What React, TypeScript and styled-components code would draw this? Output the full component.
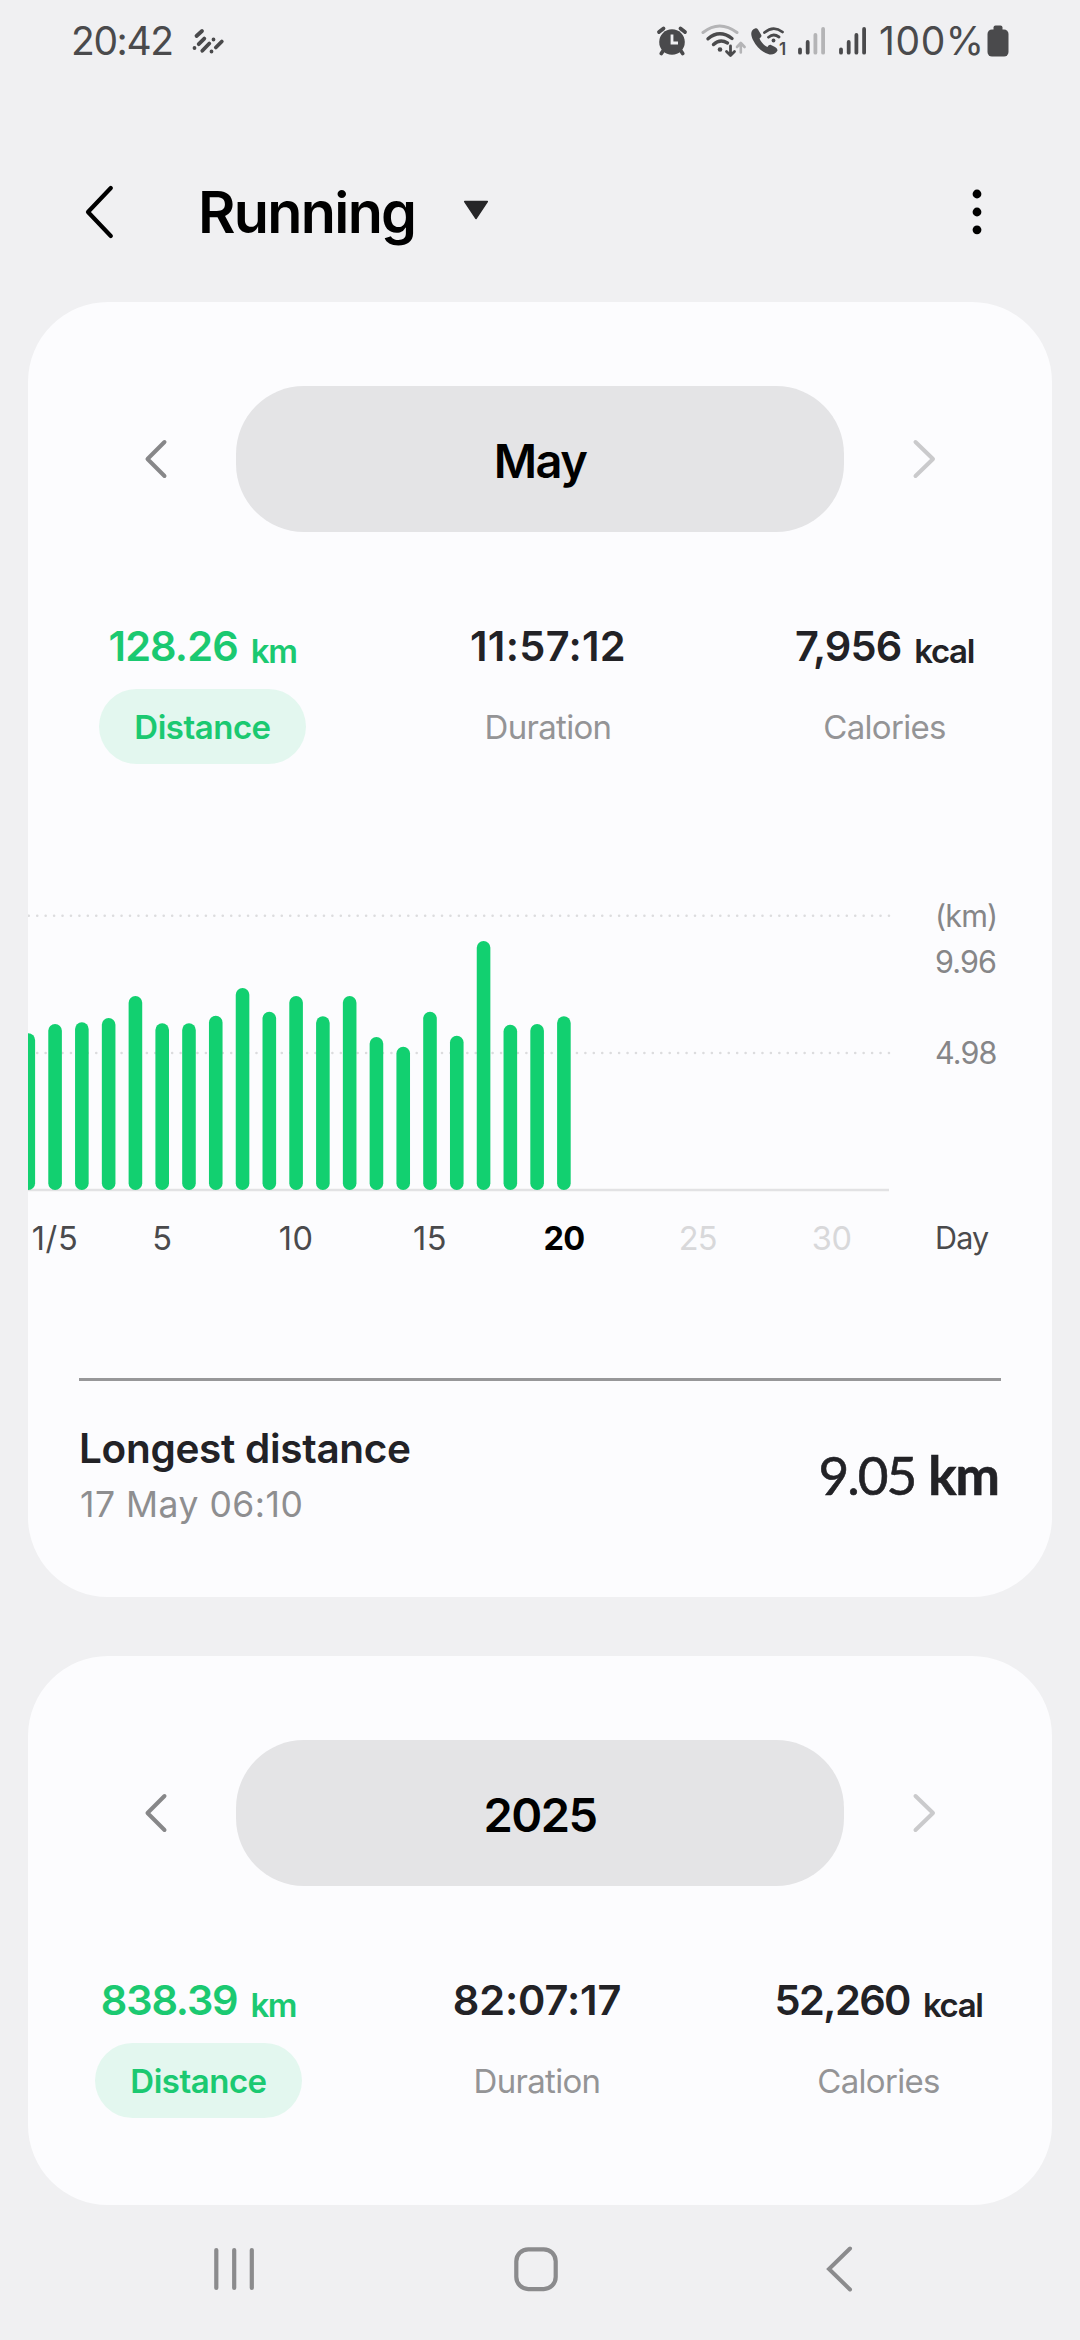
import React from "react";
import styled, { createGlobalStyle } from "styled-components";

const GlobalStyle = createGlobalStyle`
  * { box-sizing: border-box; }
  body {
    margin: 0;
    background: #f0f0f2;
    font-family: Inter, Roboto, sans-serif;
  }
  svg { display: block; flex: none; }
  button { border: 0; padding: 0; background: none; font: inherit; color: inherit; }
`;

const INK = "#4a4a4c";
const FAINT = "#b4b4b6";
const GREEN = "#12d070";

const Screen = styled.div`
  width: 1080px;
  height: 2340px;
  display: flex;
  flex-direction: column;
  overflow: hidden;
  background: #f0f0f2;
`;

const StatusBar = styled.div`
  display: flex;
  align-items: center;
  height: 82px;
  padding: 0 70px 0 71px;
  color: ${INK};
`;

const Clock = styled.div`
  width: 120px;
  font-size: 39px;
  line-height: 48px;
  font-weight: 400;
  letter-spacing: -1.4px;
`;

const StatusIcons = styled.div`
  display: flex;
  align-items: center;
  margin-left: auto;
`;

const BatteryText = styled.div`
  width: 107px;
  margin-left: 10px;
  font-size: 39px;
  line-height: 48px;
  font-weight: 400;
  letter-spacing: 0.6px;
  white-space: nowrap;
`;

const Header = styled.header`
  display: flex;
  align-items: center;
  height: 220px;
  padding: 40px 92px 0 81px;
`;

const TitleButton = styled.button`
  display: flex;
  align-items: center;
  margin-left: 79px;
`;

const Title = styled.h1`
  width: 265px;
  margin: 0;
  text-align: left;
  font-size: 57.5px;
  line-height: 70px;
  font-weight: 600;
  letter-spacing: -1.7px;
  color: #000;
`;

const MoreButton = styled.button`
  margin-left: auto;
`;

const Cards = styled.main`
  display: flex;
  flex-direction: column;
  gap: 59px;
  padding: 0 28px;
`;

const Card = styled.section`
  padding: 84px 0 0;
  border-radius: 80px;
  background: #fcfcfe;
  overflow: hidden;
`;

const Period = styled.div`
  display: flex;
  align-items: center;
  justify-content: space-between;
  padding: 0 112px;
`;

const PeriodPill = styled.button`
  width: 608px;
  height: 146px;
  padding-top: 3px;
  border-radius: 68px;
  background: #e4e4e6;
  color: #000;
  font-size: 47px;
  font-weight: 600;
  letter-spacing: -1.5px;
`;

const Stats = styled.div<{ $left: number; $gap: number; $bottom: number }>`
  display: flex;
  gap: ${(p) => p.$gap}px;
  padding: 84px 0 ${(p) => p.$bottom}px ${(p) => p.$left}px;
`;

const Stat = styled.div<{ $width: number }>`
  display: flex;
  flex-direction: column;
  align-items: center;
  gap: 13px;
  width: ${(p) => p.$width}px;
`;

const StatValue = styled.div<{ $active?: boolean; $tracking: number }>`
  display: flex;
  align-items: center;
  gap: 13px;
  height: 60px;
  color: ${(p) => (p.$active ? "#1bc971" : "#222226")};
  font-size: 41.5px;
  font-weight: 600;
  letter-spacing: ${(p) => p.$tracking}px;
  white-space: nowrap;
`;

const StatUnit = styled.span`
  padding-top: 9px;
  font-size: 33px;
  letter-spacing: -1.4px;
`;

const StatLabel = styled.div<{ $active?: boolean }>`
  display: flex;
  align-items: center;
  justify-content: center;
  height: 75px;
  padding-top: 1px;
  width: ${(p) => (p.$active ? "207px" : "auto")};
  border-radius: 38px;
  background: ${(p) => (p.$active ? "#e3f7ef" : "transparent")};
  color: ${(p) => (p.$active ? "#1bc971" : "#949496")};
  font-size: 33px;
  font-weight: ${(p) => (p.$active ? 600 : 400)};
  letter-spacing: ${(p) => (p.$active ? -0.5 : -0.7)}px;
  white-space: nowrap;
`;

const Chart = styled.svg`
  font-family: Inter, Roboto, sans-serif;
`;

const Record = styled.div`
  display: flex;
  align-items: center;
  justify-content: space-between;
  height: 219px;
  margin: 108px 51px 0;
  padding-bottom: 30px;
  border-top: 3px solid #979799;
`;

const RecordTitle = styled.div`
  padding-top: 4px;
  font-size: 40.5px;
  line-height: 58px;
  font-weight: 600;
  letter-spacing: -0.3px;
  color: #222226;
`;

const RecordDate = styled.div`
  padding-left: 1px;
  font-size: 35.5px;
  line-height: 54px;
  letter-spacing: 0.5px;
  color: #8e8e90;
`;

const RecordValue = styled.div`
  display: flex;
  gap: 13px;
  padding: 1px 2px 0 0;
  font-family: Lato, "Noto Sans", sans-serif;
  font-size: 53px;
  line-height: 72px;
  letter-spacing: -2px;
  color: #222226;
  -webkit-text-stroke: 0.6px #222226;
`;

const RecordUnit = styled.span`
  font-weight: 700;
  letter-spacing: -1px;
`;

const NavBar = styled.nav`
  display: flex;
  align-items: center;
  height: 135px;
  padding: 0 225px 7px 211px;
  justify-content: space-between;
`;

const HomeIcon = styled.svg`
  margin-right: 8px;
`;

const BAR_TOPS = [
  1033.3, 1024, 1022.3, 1018, 996, 1023.3, 1023.3, 1015.7, 988, 1011.7, 996,
  1016.3, 996, 1037, 1046.7, 1011.7, 1035.7, 941, 1024.7, 1024, 1016.3,
];
const FIRST_BAR = 28.3;
const BAR_STEP = 26.78;
const BAR_WIDTH = 13.6;
const BASELINE = 1190;

const DAYS = [
  { text: "1/5", day: 1, fill: INK, weight: 400, tracking: 0.7 },
  { text: "5", day: 5, fill: INK, weight: 400, tracking: 0 },
  { text: "10", day: 10, fill: INK, weight: 400, tracking: 0.6 },
  { text: "15", day: 15, fill: INK, weight: 400, tracking: 0.4 },
  { text: "20", day: 20, fill: "#000", weight: 700, tracking: -0.8 },
  { text: "25", day: 25, fill: "#d8d8da", weight: 400, tracking: -0.8 },
  { text: "30", day: 30, fill: "#d8d8da", weight: 400, tracking: -0.4 },
];

const SCALE = [
  { text: "(km)", y: 926.5, fill: "#868688" },
  { text: "9.96", y: 973.2, fill: "#868688" },
  { text: "4.98", y: 1063.7, fill: "#868688" },
  { text: "Day", y: 1249, fill: INK },
];

function MonthChart() {
  return (
    <Chart width="1024" height="380" viewBox="28 890 1024 380">
      {[915.7, 1053].map((y) => (
        <line key={y} x1="28.8" x2="889.5" y1={y} y2={y} stroke="#dcdcde" strokeWidth="2.6"
          strokeLinecap="round" strokeDasharray="0 8.433" />
      ))}
      <line x1="28" x2="889" y1={BASELINE} y2={BASELINE} stroke="#e2e2e4" strokeWidth="2.4" />
      {BAR_TOPS.map((top, i) => (
        <rect key={i} x={FIRST_BAR + i * BAR_STEP - BAR_WIDTH / 2} y={top} width={BAR_WIDTH}
          height={BASELINE - top} rx={BAR_WIDTH / 2} fill={GREEN} />
      ))}
      {DAYS.map((d) => (
        <text key={d.text} x={FIRST_BAR + d.day * BAR_STEP} y="1250" textAnchor="middle"
          fontSize="32.5" letterSpacing={d.tracking} fontWeight={d.weight} fill={d.fill}>
          {d.text}
        </text>
      ))}
      {SCALE.map((s) => (
        <text key={s.text} x="935" y={s.y} fontSize="30.5" letterSpacing="-0.85" fill={s.fill}>
          {s.text}
        </text>
      ))}
    </Chart>
  );
}

function Chevron({ right, color }: { right?: boolean; color: string }) {
  return (
    <svg width="34" height="44" viewBox="0 0 34 44" fill="none" stroke={color} strokeWidth="4"
      strokeLinecap="round" strokeLinejoin="round">
      <path d={right ? "M9.5 5L27 22L9.5 39" : "M24.500 5L7.500 22L24.500 39"} />
    </svg>
  );
}

type StatItem = { value: string; unit?: string; label: string; width: number; tracking: number };

function StatRow({ items, left, gap, bottom }: { items: StatItem[]; left: number; gap: number; bottom: number }) {
  return (
    <Stats $left={left} $gap={gap} $bottom={bottom}>
      {items.map((s, i) => (
        <Stat key={s.label} $width={s.width}>
          <StatValue $active={i === 0} $tracking={s.tracking}>
            {s.value}
            {s.unit && <StatUnit>{s.unit}</StatUnit>}
          </StatValue>
          <StatLabel $active={i === 0}>{s.label}</StatLabel>
        </Stat>
      ))}
    </Stats>
  );
}

function PeriodSwitch({ text }: { text: string }) {
  return (
    <Period>
      <Chevron color="#878789" />
      <PeriodPill>{text}</PeriodPill>
      <Chevron right color="#cacacc" />
    </Period>
  );
}

function ActivityIcon() {
  return (
    <svg width="34" height="30" viewBox="191 26 34 30" stroke={INK} strokeWidth="3.8" strokeLinecap="round">
      <path d="M196.500 36L202 31M198.700 44.200L204.300 38.600M202.300 50.800L209.300 43.500M215.800 47.500L221.800 41.500M194.500 48h.01M213.500 39.500h.01M211.500 51.500h.01" />
    </svg>
  );
}

function AlarmIcon() {
  return (
    <svg width="34" height="34" viewBox="655.500 25 34 34" fill="none" strokeLinecap="round">
      <circle cx="672.500" cy="43" r="12.800" fill={INK} />
      <path d="M659.500 33L664 29.500M685.500 33L681 29.500M661.800 54.500L664.500 50.500M683.200 54.500L680.500 50.500" stroke={INK} strokeWidth="3.800" />
      <path d="M672.500 35.500v8.500h6" stroke="#f0f0f2" strokeWidth="2.800" strokeLinecap="butt" />
    </svg>
  );
}

function WifiIcon() {
  return (
    <svg width="62" height="36" viewBox="689.500 24 62 36" fill="none" strokeLinecap="round">
      <path d="M703.500 33.500Q720 20.500 737.500 33.500" stroke={FAINT} strokeWidth="3" />
      <path d="M708.500 39.800Q720 30 732.500 39.500M714 45.500Q720.500 39.500 728 44" stroke={INK} strokeWidth="3.400" />
      <circle cx="720.500" cy="50.500" r="2.300" fill={INK} />
      <path d="M731 47v9M727 52.500l4 4l4-4" stroke={INK} strokeWidth="2.800" strokeLinejoin="round" />
      <path d="M741.300 53.500v-9M737.500 48l3.800-4l3.800 4" stroke={FAINT} strokeWidth="2.600" strokeLinejoin="round" />
    </svg>
  );
}

const SimMark = styled.span`
  width: 8px;
  margin: 16px 0 0 -8px;
  font-size: 17px;
  line-height: 18px;
  font-weight: 600;
`;

function WifiCallIcon() {
  return (
    <svg width="36" height="34" viewBox="751.500 25 36 34" fill="none" strokeLinecap="round">
      <path d="M755.500 29.500C751.500 31 750.500 35 753.500 41C757.500 49 763 53.500 770 55.500C773.500 56 776.500 54.500 778 51.500C778 50 777 49 775.500 48L771.500 46C770 45.500 769 46.500 768 48C764.500 46.500 761.500 43 760 39.500C762 38 762.500 37 761.500 35.500L758.500 30.500C757.500 29.200 756.800 29 755.500 29.500Z" fill={INK} />
      <path d="M765 33.500Q774 26 783 33M769 38.200Q774 34 779.500 38" stroke={INK} strokeWidth="2.800" />
      <circle cx="774" cy="41.500" r="1.900" fill={INK} />
    </svg>
  );
}

function SignalIcon({ level }: { level: number }) {
  return (
    <svg width="32" height="34" viewBox="0 0 32 34" strokeWidth="3.800" strokeLinecap="round">
      {[25.500, 18, 11, 5].map((y, i) => (
        <line key={y} x1={4 + i * 7.700} x2={4 + i * 7.700} y1={y} y2="28.700" stroke={i < level ? INK : FAINT} />
      ))}
    </svg>
  );
}

const SignalGap = styled.span`
  width: 9px;
`;

export default function App() {
  return (
    <Screen>
      <GlobalStyle />
      <StatusBar>
        <Clock>20:42</Clock>
        <ActivityIcon />
        <StatusIcons>
          <AlarmIcon />
          <WifiIcon />
          <WifiCallIcon />
          <SimMark>1</SimMark>
          <SignalGap />
          <SignalIcon level={2} />
          <SignalGap />
          <SignalIcon level={4} />
          <BatteryText>100%</BatteryText>
          <svg width="24" height="34" viewBox="0 0 24 34" fill={INK}>
            <rect x="7.500" y="1.500" width="9" height="8" rx="2" />
            <rect x="1.500" y="5.500" width="21" height="27" rx="4.500" />
          </svg>
        </StatusIcons>
      </StatusBar>

      <Header>
        <svg width="38" height="60" viewBox="0 0 38 60" fill="none" stroke="#000" strokeWidth="4.200"
          strokeLinecap="round" strokeLinejoin="round">
          <path d="M29.800 6L7 30L29.800 54" />
        </svg>
        <TitleButton>
          <Title>Running</Title>
          <svg width="26" height="24" viewBox="-2 0 26 24" fill="#262628" stroke="#262628" strokeWidth="1.500" strokeLinejoin="round">
            <path d="M-.3 1.500H22.300L11 18.500Z" />
          </svg>
        </TitleButton>
        <MoreButton aria-label="More options">
          <svg width="22" height="48" viewBox="0 0 22 48">
            {[6, 24, 41.800].map((cy) => (
              <circle key={cy} cx="11" cy={cy} r="4.400" />
            ))}
          </svg>
        </MoreButton>
      </Header>

      <Cards>
        <Card>
          <PeriodSwitch text="May" />
          <StatRow
            left={71}
            gap={140}
            bottom={126}
            items={[
              { value: "128.26", unit: "km", label: "Distance", width: 207, tracking: -0.9 },
              { value: "11:57:12", label: "Duration", width: 204, tracking: 0.3 },
              { value: "7,956", unit: "kcal", label: "Calories", width: 189, tracking: -0.9 },
            ]}
          />
          <MonthChart />
          <Record>
            <div>
              <RecordTitle>Longest distance</RecordTitle>
              <RecordDate>17 May 06:10</RecordDate>
            </div>
            <RecordValue>
              9.05<RecordUnit>km</RecordUnit>
            </RecordValue>
          </Record>
        </Card>

        <Card>
          <PeriodSwitch text="2025" />
          <StatRow
            left={67}
            gap={125}
            bottom={87}
            items={[
              { value: "838.39", unit: "km", label: "Distance", width: 207, tracking: -1.2 },
              { value: "82:07:17", label: "Duration", width: 220, tracking: -0.1 },
              { value: "52,260", unit: "kcal", label: "Calories", width: 213, tracking: -1.6 },
            ]}
          />
        </Card>
      </Cards>

      <NavBar>
        <svg width="46" height="48" viewBox="0 0 46 48" stroke="#8b8b8d" strokeWidth="4.200" strokeLinecap="round">
          <path d="M5.300 5V43M23.200 5V43M40.800 5V43" />
        </svg>
        <HomeIcon width="48" height="48" viewBox="0 0 48 48" fill="none" stroke="#8b8b8d" strokeWidth="4.200">
          <rect x="4.300" y="4.300" width="39.400" height="39.800" rx="12" />
        </HomeIcon>
        <svg width="32" height="50" viewBox="0 0 32 50" fill="none" stroke="#8b8b8d" strokeWidth="4" strokeLinecap="round">
          <path d="M27 4.500L6 25L27 45.500" />
        </svg>
      </NavBar>
    </Screen>
  );
}
